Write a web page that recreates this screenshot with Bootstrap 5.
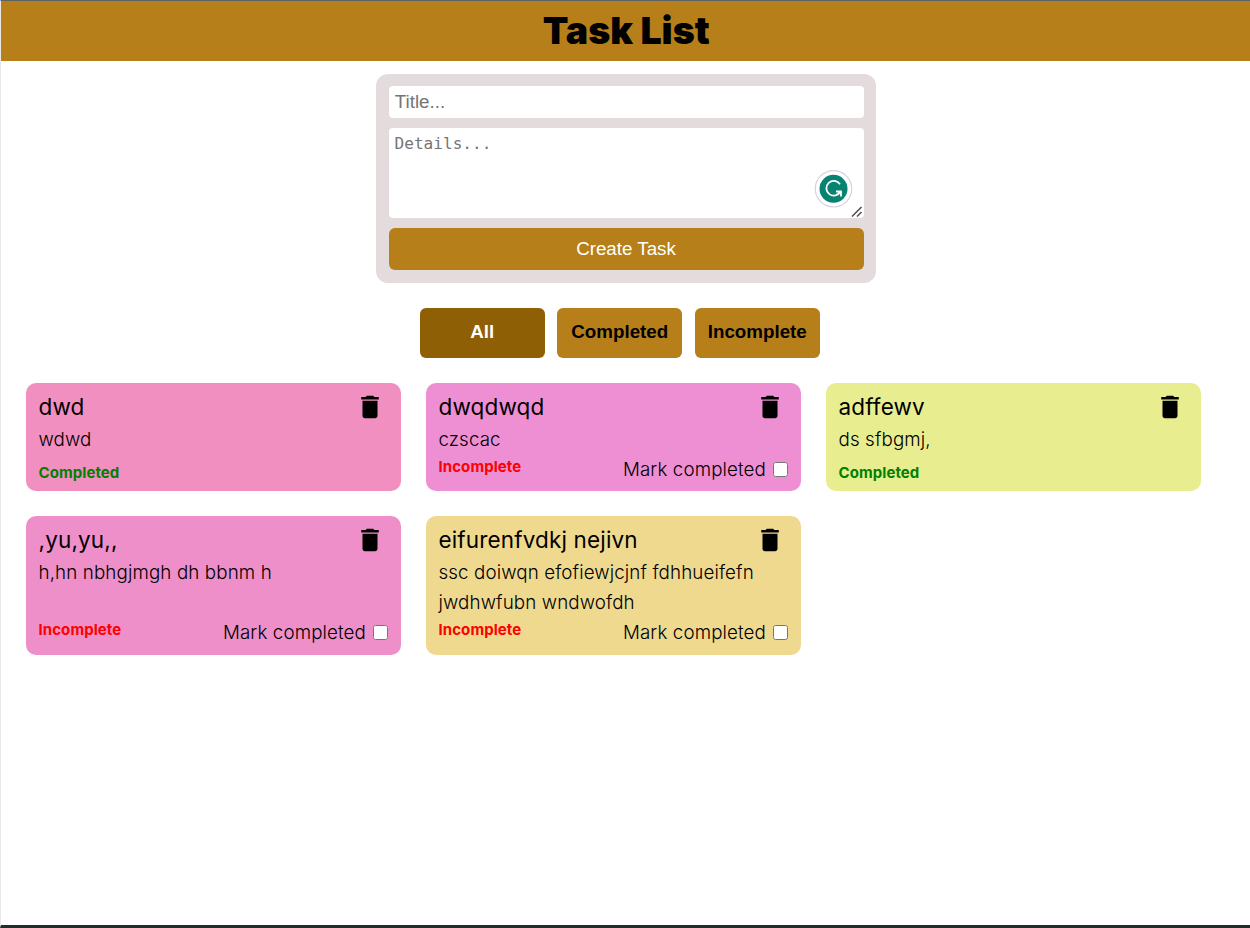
<!DOCTYPE html>
<html lang="en">
<head>
<meta charset="utf-8">
<meta name="viewport" content="width=device-width, initial-scale=1">
<title>Task List</title>
<link href="https://cdn.jsdelivr.net/npm/bootstrap@5.3.0/dist/css/bootstrap.min.css" rel="stylesheet">
<style>
  body { font-family: Inter, sans-serif; font-size: 18.75px; font-weight: 300; line-height: 30px; letter-spacing: .12px; color: #000; }
  .app-shell { height: 928px; border-top: 1px solid #5f6165; border-left: 1px solid #ebe7e8; border-bottom: 3px solid #1d3025; }
  .app-header { height: 60px; padding-left: 1.5px; background: #b67f19; }
  .app-header h1 { font-size: 37.5px; font-weight: 900; line-height: 60px; letter-spacing: 0; }
  .task-form { width: 500px; height: 209px; margin-top: 13px; padding: 12px 12px 13px 13px; gap: 10px; border-radius: 12px; background: #e3dbdc; }
  .task-form .form-control { border: 0; border-radius: 4px; color: #000; letter-spacing: 0; }
  .task-form .form-control::placeholder { color: #757575; opacity: 1; }
  .task-form .title-input { height: 32px; padding: 0 6.3px; font: 400 18.75px "Liberation Sans", sans-serif; }
  .task-form .details-input { display: block; height: 90px; padding: 6px; font: 400 16.1px/20px "DejaVu Sans Mono", monospace; resize: none; }
  .assist-mark { right: 11px; bottom: 10px; width: 39px; height: 39px; }
  .grip { right: 1px; bottom: 0; width: 12px; height: 12px; }
  .btn-create { height: 42px; padding: 0; border: 0; border-radius: 6px; background: #b67f19; color: #fff; font: 400 18.75px "Liberation Sans", sans-serif; letter-spacing: 0; }
  .filter-bar { margin: 25px 12px 0 0; gap: 12.5px; }
  .btn-filter { width: 125px; height: 50px; padding: 0 0 2px 0.5px; border: 0; border-radius: 6px; background: #b67f19; color: #000; font: 700 18.75px "Liberation Sans", sans-serif; letter-spacing: 0; }
  .btn-filter.active { background: #8f5f05 !important; color: #fff !important; }
  .task-grid { display: grid; grid-template-columns: repeat(3, 375px); gap: 25px; margin: 25px 0 0 25px; }
  .task-card { border-radius: 10px; padding: 9px 12.5px 6.4px; }
  .task-title { font-size: 22.5px; font-weight: 400; line-height: 30px; letter-spacing: .15px; }
  .task-text { margin-top: 3px; }
  .task-status { font: 700 15px/18px Inter, sans-serif; letter-spacing: .08px; }
  .is-done { color: green; margin-bottom: 2.6px; }
  .is-open { color: red; margin-top: 3px; }
  .mark-label { margin-right: 1px; }
  .task-check { width: 15px; height: 15px; margin: 0 0 1px 6.5px; }
  .trash { width: 30px; height: 30px; margin-right: 4px; }
</style>
</head>
<body>
<div class="app-shell">
  <header class="app-header text-center"><h1 class="m-0">Task List</h1></header>
  <form class="task-form d-flex flex-column mx-auto">
    <input class="form-control title-input" type="text" placeholder="Title...">
    <div class="position-relative">
      <textarea class="form-control details-input" placeholder="Details..."></textarea>
      <svg class="assist-mark position-absolute" viewBox="0 0 39 39" aria-hidden="true">
        <circle cx="19.5" cy="19.8" r="18.2" fill="#fff" stroke="#d3d3e0" stroke-width="1.2"/>
        <circle cx="19.5" cy="19.8" r="14" fill="#068372"/>
        <path d="M26 15.200A7.400 7.400 0 1 0 26.400 22.500M22 22.500h5v5" fill="none" stroke="#fff" stroke-width="1.800"/>
      </svg>
      <svg class="grip position-absolute" viewBox="0 0 12 12" aria-hidden="true"><path d="M1 10.500L10.500 1M6 10.500L10.500 6" fill="none" stroke="#4a4a4a" stroke-width="1.500"/></svg>
    </div>
    <button class="btn btn-create" type="button">Create Task</button>
  </form>
  <div class="filter-bar d-flex justify-content-center">
    <button class="btn btn-filter active" type="button">All</button>
    <button class="btn btn-filter" type="button">Completed</button>
    <button class="btn btn-filter" type="button">Incomplete</button>
  </div>
  <svg class="d-none"><symbol id="trash" viewBox="0 0 24 24"><path d="M6 19c0 1.100.9 2 2 2h8c1.100 0 2-.9 2-2V7H6v12zM19 4h-3.500l-1-1h-5l-1 1H5v2h14V4z"/></symbol></svg>
  <main class="task-grid">
    <article class="task-card d-flex flex-column" style="background:#f08fc0">
      <div class="d-flex justify-content-between"><div class="task-title">dwd</div><svg class="trash"><use href="#trash"/></svg></div>
      <div class="task-text">wdwd</div>
      <div class="task-status is-done mt-auto">Completed</div>
    </article>
    <article class="task-card d-flex flex-column" style="background:#ee8fd4">
      <div class="d-flex justify-content-between"><div class="task-title">dwqdwqd</div><svg class="trash"><use href="#trash"/></svg></div>
      <div class="task-text">czscac</div>
      <div class="d-flex justify-content-between mt-auto"><span class="task-status is-open">Incomplete</span><label class="mark-label d-flex align-items-center">Mark completed<input class="task-check" type="checkbox"></label></div>
    </article>
    <article class="task-card d-flex flex-column" style="background:#e8ee8f">
      <div class="d-flex justify-content-between"><div class="task-title">adffewv</div><svg class="trash"><use href="#trash"/></svg></div>
      <div class="task-text">ds sfbgmj,</div>
      <div class="task-status is-done mt-auto">Completed</div>
    </article>
    <article class="task-card d-flex flex-column" style="background:#ee8fc9">
      <div class="d-flex justify-content-between"><div class="task-title">,yu,yu,,</div><svg class="trash"><use href="#trash"/></svg></div>
      <div class="task-text">h,hn nbhgjmgh dh bbnm h</div>
      <div class="d-flex justify-content-between mt-auto"><span class="task-status is-open">Incomplete</span><label class="mark-label d-flex align-items-center">Mark completed<input class="task-check" type="checkbox"></label></div>
    </article>
    <article class="task-card d-flex flex-column" style="background:#efd98f">
      <div class="d-flex justify-content-between"><div class="task-title">eifurenfvdkj nejivn</div><svg class="trash"><use href="#trash"/></svg></div>
      <div class="task-text">ssc doiwqn efofiewjcjnf fdhhueifefn jwdhwfubn wndwofdh</div>
      <div class="d-flex justify-content-between mt-auto"><span class="task-status is-open">Incomplete</span><label class="mark-label d-flex align-items-center">Mark completed<input class="task-check" type="checkbox"></label></div>
    </article>
  </main>
</div>
<script src="https://cdn.jsdelivr.net/npm/bootstrap@5.3.0/dist/js/bootstrap.bundle.min.js"></script>
</body>
</html>
